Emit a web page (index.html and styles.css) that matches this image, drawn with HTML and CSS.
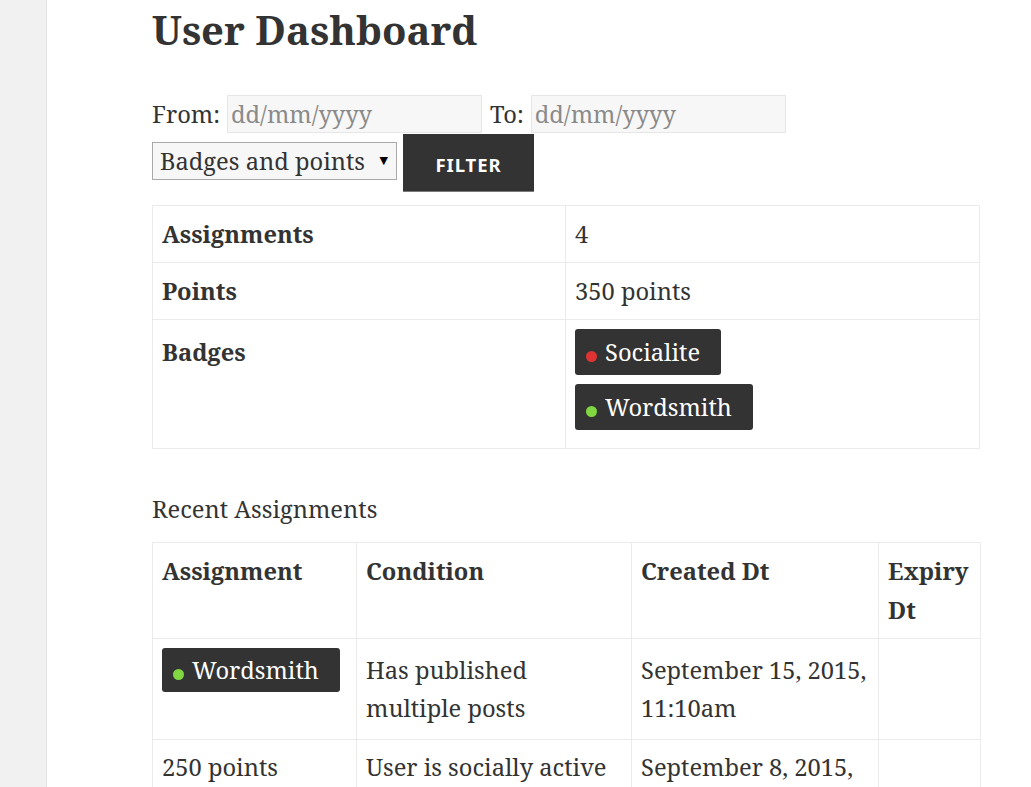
FILE: index.html
```html
<!DOCTYPE html>
<html lang="en">
<head>
<meta charset="utf-8">
<title>User Dashboard</title>
<link rel="stylesheet" href="styles.css">
</head>
<body>
<div class="layout">
  <div class="sidebar"></div>
  <main class="main">
    <h1 class="title">User Dashboard</h1>
    <form class="filters">
      <div class="filter-row">
        <label class="lbl">From:</label>
        <input class="date" type="text" placeholder="dd/mm/yyyy">
        <label class="lbl lbl-to">To:</label>
        <input class="date" type="text" placeholder="dd/mm/yyyy">
      </div>
      <div class="filter-row filter-row-2">
        <span class="select-wrap">
          <select class="select">
            <option>Badges and points</option>
          </select>
          <span class="select-arrow">&#9660;</span>
        </span>
        <button class="btn" type="button">Filter</button>
      </div>
    </form>

    <table class="tbl summary">
      <tbody>
        <tr><th>Assignments</th><td>4</td></tr>
        <tr><th>Points</th><td>350 points</td></tr>
        <tr><th>Badges</th><td>
          <span class="badge"><span class="dot dot-red"></span>Socialite</span><br>
          <span class="badge"><span class="dot dot-green"></span>Wordsmith</span>
        </td></tr>
      </tbody>
    </table>

    <p class="section">Recent Assignments</p>

    <table class="tbl recent">
      <colgroup>
        <col class="c1"><col class="c2"><col class="c3"><col class="c4">
      </colgroup>
      <thead>
        <tr><th>Assignment</th><th>Condition</th><th>Created Dt</th><th>Expiry Dt</th></tr>
      </thead>
      <tbody>
        <tr>
          <td><span class="badge badge-sm"><span class="dot dot-green"></span>Wordsmith</span></td>
          <td>Has published multiple posts</td>
          <td>September 15, 2015, 11:10am</td>
          <td></td>
        </tr>
        <tr>
          <td>250 points</td>
          <td>User is socially active</td>
          <td>September 8, 2015, 2:45pm</td>
          <td></td>
        </tr>
      </tbody>
    </table>
  </main>
</div>
</body>
</html>
```

FILE: styles.css
```css
html, body {
  margin: 0;
  padding: 0;
  background: #fff;
}

body {
  font-family: "Noto Serif", "DejaVu Serif", serif;
  font-size: 23.7px;
  line-height: 38.5px;
  color: #333;
}

.layout {
  display: flex;
  min-height: 100vh;
}

.sidebar {
  width: 46px;
  flex: none;
  background: #f1f1f1;
  border-right: 1px solid #e4e4e4;
}

.main {
  padding-left: 105px;
  width: 828px;
}

.title {
  margin: 0;
  padding-top: 4px;
  font-size: 40px;
  line-height: 52px;
  font-weight: 700;
}

.filters {
  margin-top: 39px;
}

.filter-row {
  display: flex;
  align-items: center;
  height: 38px;
}

.filter-row-2 {
  margin-top: 1px;
  height: 58px;
  align-items: flex-start;
}

.lbl {
  margin-right: 7px;
}

.lbl-to {
  margin-left: 8px;
}

.date {
  box-sizing: border-box;
  width: 255px;
  height: 38px;
  margin: 0;
  padding: 0 3px;
  border: 1px solid #e6e6e6;
  background: #f7f7f7;
  font-family: inherit;
  font-size: 23.7px;
  color: #333;
  outline: none;
}

.date::placeholder {
  color: #8a8a8a;
}

.select-wrap {
  position: relative;
  display: inline-block;
  margin-top: 8px;
}

.select {
  -webkit-appearance: none;
  appearance: none;
  box-sizing: border-box;
  width: 245px;
  height: 38px;
  margin: 0;
  padding: 0 0 0 7px;
  border: 1px solid #a9a9a9;
  border-radius: 0;
  background: #f7f7f7;
  font-family: inherit;
  font-size: 23.7px;
  color: #333;
}

.select-arrow {
  position: absolute;
  right: 9px;
  top: 12px;
  font-size: 11px;
  line-height: 12px;
  color: #000;
  pointer-events: none;
}

.btn {
  box-sizing: border-box;
  width: 131px;
  height: 58px;
  margin: 0 0 0 6px;
  padding: 4px 0 0;
  border: 0;
  border-bottom: 1px solid #7a7a7a;
  background: #333;
  color: #fff;
  font-family: "Noto Sans", "Open Sans", sans-serif;
  font-size: 18.5px;
  font-weight: 700;
  letter-spacing: 0.05em;
  text-transform: uppercase;
}

.tbl {
  border-collapse: separate;
  border-spacing: 0;
  border-top: 1px solid #ebebeb;
  border-left: 1px solid #ebebeb;
  width: 828px;
  table-layout: fixed;
}

.tbl th,
.tbl td {
  border-right: 1px solid #ebebeb;
  border-bottom: 1px solid #ebebeb;
  padding: 8.8px 9px;
  text-align: left;
  vertical-align: baseline;
}

.tbl th {
  font-weight: 700;
}

.summary {
  margin-top: 13px;
}

.summary th {
  width: 394px;
}

.section {
  margin: 41px 0 0;
  line-height: 38.5px;
}

.recent {
  margin-top: 14px;
}

.recent tbody td {
  padding-bottom: 11px;
}

.c1 { width: 204px; }
.c2 { width: 275px; }
.c3 { width: 247px; }
.c4 { width: 102px; }

.badge {
  display: inline-block;
  background: #333;
  color: #fff;
  border-radius: 3px;
  padding: 4px 21px 4px 11px;
  line-height: 38px;
  margin-bottom: 9px;
  white-space: nowrap;
}

.badge-sm {
  padding-top: 3px;
  padding-bottom: 3px;
}

.dot {
  display: inline-block;
  width: 11px;
  height: 11px;
  border-radius: 50%;
  margin-right: 8px;
  vertical-align: -1px;
}

.dot-red { background: #dd3333; }
.dot-green { background: #81d742; }
```
